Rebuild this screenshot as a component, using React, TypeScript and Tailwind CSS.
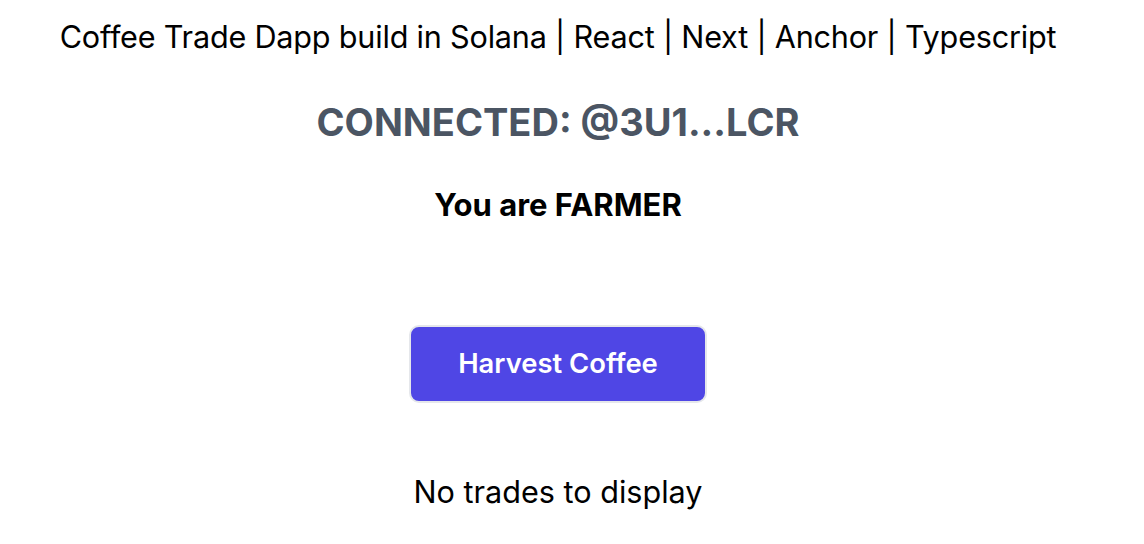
import React from "react";

export default function App() {
  return (
    <div className="w-[1144px] h-[544px] bg-white">
      <div className="w-[1116px] flex flex-col items-center text-black" style={{ fontFamily: "Inter, 'Noto Sans', sans-serif" }}>
        <div className="mt-[18px] text-[30.6px] leading-[38px] tracking-[-0.2px]">Coffee Trade Dapp build in Solana | React | Next | Anchor | Typescript</div>
        <div className="mt-[43px] text-[38px] leading-[46px] font-bold text-[#4b5563]">CONNECTED: @3U1...LCR</div>
        <div className="mt-[41px] text-[31px] leading-[38px] font-bold">You are FARMER</div>
        <button className="mt-[101px] w-[298px] h-[78px] rounded-[10px] bg-[#4f46e5] border-2 border-[#e5e7eb] text-white text-[27.4px] font-semibold">Harvest Coffee</button>
        <div className="mt-[70px] text-[30.6px] leading-[38px]">No trades to display</div>
      </div>
    </div>
  );
}
